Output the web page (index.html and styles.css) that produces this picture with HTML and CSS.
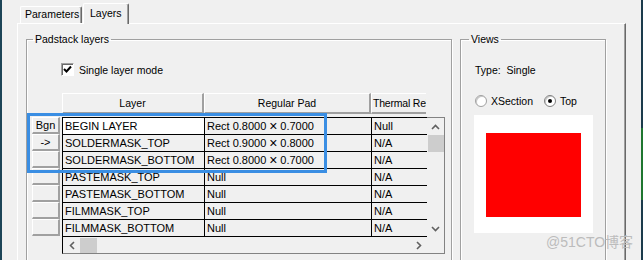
FILE: index.html
```html
<!DOCTYPE html>
<html lang="en">
<head>
  <meta charset="UTF-8" />
  <title>Padstack Editor - Layers</title>
  <link rel="stylesheet" href="styles.css">
</head>
<body>
  <div class="screen">
    <div class="desk desk-left"></div>

    <div class="dialog">
      <!-- Tabs -->
      <div class="tabs">
        <div class="tab">Parameters</div>
        <div class="tab active">Layers</div>
      </div>

      <div class="panel">
        <fieldset class="group pad-group">
          <legend>Padstack layers</legend>

          <label class="check">
            <span class="box">
              <svg width="9" height="9" viewBox="0 0 9 9"><path d="M1 4 L3.5 6.5 L8 1.5" fill="none" stroke="#000" stroke-width="2"/></svg>
            </span>
            Single layer mode
          </label>

          <div class="grid">
            <div class="grid-head">
              <div class="hcell c-layer">Layer</div>
              <div class="hcell c-pad">Regular Pad</div>
              <div class="hcell c-thermal">Thermal Relief</div>
            </div>

            <div class="grid-main">
              <div class="row-btns">
                <div class="rbtn">Bgn</div>
                <div class="rbtn">-&gt;</div>
                <div class="rbtn"></div>
                <div class="rbtn"></div>
                <div class="rbtn"></div>
                <div class="rbtn"></div>
                <div class="rbtn"></div>
              </div>

              <div class="gbody">
                <div class="cells">
                  <div class="row"><div class="cell current">BEGIN LAYER</div><div class="cell">Rect 0.8000<span class="x">×</span>0.7000</div><div class="cell">Null</div></div>
                  <div class="row"><div class="cell">SOLDERMASK_TOP</div><div class="cell">Rect 0.9000<span class="x">×</span>0.8000</div><div class="cell">N/A</div></div>
                  <div class="row"><div class="cell">SOLDERMASK_BOTTOM</div><div class="cell">Rect 0.8000<span class="x">×</span>0.7000</div><div class="cell">N/A</div></div>
                  <div class="row"><div class="cell">PASTEMASK_TOP</div><div class="cell">Null</div><div class="cell">N/A</div></div>
                  <div class="row"><div class="cell">PASTEMASK_BOTTOM</div><div class="cell">Null</div><div class="cell">N/A</div></div>
                  <div class="row"><div class="cell">FILMMASK_TOP</div><div class="cell">Null</div><div class="cell">N/A</div></div>
                  <div class="row"><div class="cell">FILMMASK_BOTTOM</div><div class="cell">Null</div><div class="cell">N/A</div></div>
                </div>

                <div class="vscroll">
                  <div class="arrow">
                    <svg width="9" height="6" viewBox="0 0 9 6"><path d="M1 5 L4.5 1.5 L8 5" fill="none" stroke="#606060" stroke-width="1.6"/></svg>
                  </div>
                  <div class="thumb"></div>
                  <div class="track"></div>
                  <div class="arrow">
                    <svg width="9" height="6" viewBox="0 0 9 6"><path d="M1 1 L4.5 4.5 L8 1" fill="none" stroke="#606060" stroke-width="1.6"/></svg>
                  </div>
                </div>

                <div class="hscroll">
                  <div class="arrow">
                    <svg width="6" height="9" viewBox="0 0 6 9"><path d="M5 1 L1.5 4.5 L5 8" fill="none" stroke="#606060" stroke-width="1.6"/></svg>
                  </div>
                  <div class="thumb"></div>
                  <div class="track"></div>
                  <div class="arrow">
                    <svg width="6" height="9" viewBox="0 0 6 9"><path d="M1 1 L4.5 4.5 L1 8" fill="none" stroke="#606060" stroke-width="1.6"/></svg>
                  </div>
                </div>
                <div class="corner"></div>
              </div>
            </div>
          </div>
        </fieldset>

        <fieldset class="group views">
          <legend>Views</legend>
          <div class="type-line">Type:&nbsp; Single</div>
          <div class="radios">
            <span class="radio"></span><span class="radio-label">XSection</span>
            <span class="radio on"></span><span class="radio-label">Top</span>
          </div>
          <div class="preview">
            <div class="pad-shape"></div>
          </div>
        </fieldset>
      </div>
    </div>

    <div class="desk desk-right"></div>
  </div>

  <!-- annotation over the first rows -->
  <div class="mark"></div>
  <div class="watermark">@51CTO博客</div>
</body>
</html>
```

FILE: styles.css
```css
* {
  box-sizing: border-box;
}

body {
  margin: 0;
  font-family: "Liberation Sans", Arial, "Noto Sans CJK SC", sans-serif;
  font-size: 10.5px;
  color: #000;
  background: #f0f0f0;
  overflow: hidden;
}

.screen {
  display: flex;
  height: 260px;
  overflow: hidden;
}

.desk {
  width: 2px;
  flex: none;
}

.desk-left {
  background: #1d4557;
}

.desk-right {
  background: linear-gradient(to bottom, #1b3b4c 0 128px, #1e7630 128px 200px, #1b3b4c 200px);
}

.dialog {
  flex: 1;
  background: #f0f0f0;
  padding-top: 3px;
}

/* Tabs */
.tabs {
  display: flex;
  align-items: flex-end;
  height: 20px;
  padding-left: 18px;
}

.tab {
  height: 17px;
  width: 62px;
  padding-left: 4px;
  line-height: 15px;
  border-top: 1px solid #fff;
  border-left: 1px solid #fff;
  border-right: 1px solid #696969;
  box-shadow: inset -1px 0 0 #a0a0a0;
  border-radius: 2px 2px 0 0;
  white-space: nowrap;
}

.tab.active {
  position: relative;
  z-index: 1;
  width: 46px;
  height: 21px;
  margin-left: 1px;
  margin-bottom: -1px;
  padding-left: 6px;
  line-height: 18px;
  background: #f0f0f0;
}

.panel {
  display: flex;
  gap: 8px;
  margin-left: 15px;
  width: 609px;
  height: 240px;
  padding-left: 8px;
  border-top: 1px solid #fff;
  border-left: 1px solid #fff;
  border-right: 1px solid #696969;
  box-shadow: inset -1px 0 0 #a0a0a0;
}

/* Group boxes */
.group {
  margin: 9px 0 0 0;
  padding: 0;
  min-width: 0;
  border: 1px solid #a0a0a0;
  box-shadow: inset 1px 1px 0 #fff, 1px 1px 0 #fff;
  height: 260px;
}

.group legend {
  margin-left: 6px;
  padding: 0 2px;
  line-height: 13px;
}

.pad-group {
  width: 426px;
}

.views {
  width: 146px;
  padding-left: 14px;
}

.views legend {
  margin-left: -6px;
}

/* Checkbox */
.check {
  display: flex;
  align-items: center;
  gap: 5px;
  height: 13px;
  margin: 17px 0 0 34px;
}

.box {
  display: flex;
  align-items: center;
  justify-content: center;
  width: 13px;
  height: 13px;
  background: #fff;
  border-top: 1px solid #a0a0a0;
  border-left: 1px solid #a0a0a0;
  border-right: 1px solid #fff;
  border-bottom: 1px solid #fff;
  box-shadow: inset 1px 1px 0 #696969;
}

/* Grid */
.grid {
  margin: 17px 0 0 5px;
}

.grid-head {
  display: flex;
  height: 21px;
  margin-left: 30px;
  margin-bottom: 3px;
  width: 364px;
  overflow: hidden;
}

.hcell {
  flex: none;
  height: 21px;
  line-height: 18px;
  text-align: center;
  white-space: nowrap;
  overflow: hidden;
  border-top: 1px solid #fff;
  border-left: 1px solid #fff;
  border-right: 2px solid #a0a0a0;
  border-bottom: 2px solid #a0a0a0;
}

.c-layer {
  width: 142px;
}

.c-pad {
  width: 167px;
}

.c-thermal {
  width: 70px;
  text-align: left;
  padding-left: 1px;
  letter-spacing: -0.2px;
}

.grid-main {
  display: flex;
}

.row-btns {
  width: 28px;
  margin-right: 2px;
}

.rbtn {
  height: 17px;
  line-height: 15px;
  font-size: 11px;
  text-align: center;
  border-top: 1px solid #fff;
  border-left: 1px solid #fff;
  border-right: 2px solid #a0a0a0;
  border-bottom: 2px solid #a0a0a0;
}

.gbody {
  display: grid;
  grid-template-columns: 364px 17px;
  grid-template-rows: 120px 16px;
  border-left: 1px solid #000;
  border-right: 1px solid #828282;
  border-bottom: 1px solid #828282;
}

.cells {
  border-top: 1px solid #000;
  font-size: 11px;
}

.row {
  display: grid;
  grid-template-columns: 142px 167px 55px;
  height: 17px;
  border-bottom: 1px solid #000;
}

.cell {
  padding-left: 2px;
  line-height: 16px;
  white-space: nowrap;
  overflow: hidden;
}

.cell:nth-child(-n+2) {
  border-right: 1px solid #000;
}

.cell.current {
  background: #fff;
}

.x {
  display: inline-block;
  width: 14px;
  text-align: center;
  font-size: 14px;
  line-height: 16px;
  vertical-align: top;
}

.vscroll {
  display: flex;
  flex-direction: column;
  border-top: 1px solid #828282;
}

.vscroll .arrow {
  height: 17px;
  display: flex;
  align-items: center;
  justify-content: center;
}

.vscroll .thumb {
  height: 17px;
  margin-left: 1px;
  background: #cdcdcd;
}

.track {
  flex: 1;
}

.hscroll {
  display: flex;
}

.hscroll .arrow {
  width: 17px;
  display: flex;
  align-items: center;
  justify-content: center;
}

.hscroll .thumb {
  width: 17px;
  margin-top: 1px;
  background: #cdcdcd;
}

/* Views */
.type-line {
  margin-top: 18px;
  line-height: 13px;
}

.radios {
  display: flex;
  align-items: center;
  margin-top: 17px;
  height: 13px;
}

.radio {
  display: flex;
  align-items: center;
  justify-content: center;
  width: 12px;
  height: 12px;
  border-radius: 50%;
  background: #fff;
  border: 1px solid #a0a0a0;
  box-shadow: inset 1px 1px 0 #c8c8c8;
}

.radio.on {
  border-color: #808080;
}

.radio.on::after {
  content: "";
  width: 4px;
  height: 4px;
  border-radius: 50%;
  background: #000;
}

.radio-label {
  margin: 0 11px 0 4px;
}

.preview {
  width: 119px;
  height: 118px;
  margin: 8px 0 0 -1px;
  padding: 18px 0 0 12px;
  background: #fff;
}

.pad-shape {
  width: 95px;
  height: 84px;
  background: #ff0000;
}

/* Overlays */
.mark {
  position: absolute;
  left: 27px;
  top: 113px;
  width: 300px;
  height: 60px;
  border: 3px solid #3a8ee3;
}

.watermark {
  position: absolute;
  left: 546px;
  top: 234px;
  font-size: 14px;
  line-height: 17px;
  color: #bcbcbc;
  white-space: nowrap;
}
```
